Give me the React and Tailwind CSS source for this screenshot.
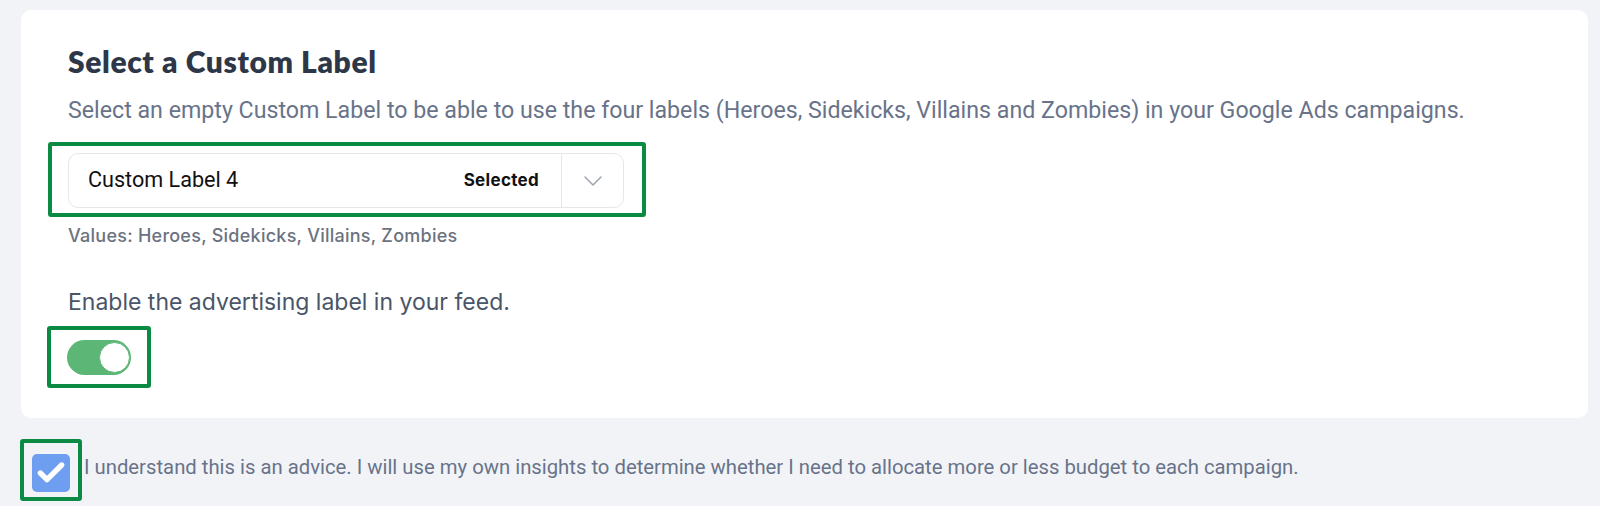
import React, { useState } from 'react';
import { ChevronDown, Check } from 'lucide-react';

const sans = { fontFamily: 'Roboto, "Liberation Sans", sans-serif' };

export default function App() {
  const [enabled, setEnabled] = useState(true);
  const [agreed, setAgreed] = useState(true);

  return (
    <div className="min-h-[506px] bg-[#f2f3f7] pl-[21px] pr-[12px] pt-[10px]" style={sans}>
      <div className="bg-white rounded-[10px] pl-[47px] pr-8 pt-[33px] pb-[30px]">
        <h2 className="text-[30px] leading-[36px] font-extrabold tracking-[0.6px] text-[#2d3748] font-['Lato',sans-serif]">
          Select a Custom Label
        </h2>
        <p className="mt-[16px] text-[23.2px] leading-[30px] text-[#68738a]">
          Select an empty Custom Label to be able to use the four labels (Heroes, Sidekicks, Villains and Zombies) in your Google Ads campaigns.
        </p>

        {/* select */}
        <div className="mt-[17px] -ml-[20px] w-[598px] border-4 border-[#0b8a43] rounded-[3px] pl-4 pr-[18px] pt-[7px] pb-[5px]">
          <div className="flex items-center h-[55px] border border-[#e5e7eb] rounded-[10px]">
            <span className="flex-1 pl-[19px] text-[21.6px] text-[#111]">Custom Label 4</span>
            <span className="pr-[22px] text-[17px] font-bold tracking-[0.3px] text-[#111] font-['Inter',sans-serif]">Selected</span>
            <div className="h-full w-[62px] border-l border-[#e5e7eb] flex items-center justify-center">
              <ChevronDown size={32} strokeWidth={1.1} className="text-[#9ca3af]" />
            </div>
          </div>
        </div>
        <p className="mt-[7px] text-[18px] leading-[24px] font-medium tracking-[0.25px] text-[#6b7280] font-['Inter',sans-serif]">
          Values: Heroes, Sidekicks, Villains, Zombies
        </p>

        <p className="mt-[39px] text-[23px] leading-[30px] text-[#4a5568] font-['Inter',sans-serif]">
          Enable the advertising label in your feed.
        </p>

        {/* toggle */}
        <div className="mt-[9px] -ml-[21px] w-[104px] border-4 border-[#0b8a43] rounded-[3px] pl-4 pt-[10px] pb-[9px]">
          <button
            onClick={() => setEnabled(!enabled)}
            className={`relative block w-[64px] h-[35px] rounded-full ${enabled ? 'bg-[#5cb776]' : 'bg-gray-300'}`}
          >
            <span
              className={`absolute top-[2px] h-[31px] w-[31px] rounded-full bg-white border-[1.5px] border-[#5cb776] ${enabled ? 'right-[1px]' : 'left-[1px]'}`}
            />
          </button>
        </div>
      </div>

      {/* confirmation */}
      <div className="mt-[21px] -ml-[1px] flex items-start">
        <div className="w-[62px] h-[62px] border-4 border-[#0b8a43] rounded-[3px] pl-[8px] pt-[11px]">
          <button
            onClick={() => setAgreed(!agreed)}
            className="w-[38px] h-[38px] rounded-[5px] bg-[#6d9ef0] flex items-center justify-center"
          >
            {agreed && <Check size={32} strokeWidth={4} className="text-white" />}
          </button>
        </div>
        <p className="ml-[2px] mt-[15px] text-[20.3px] leading-[26px] text-[#68738a]">
          I understand this is an advice. I will use my own insights to determine whether I need to allocate more or less budget to each campaign.
        </p>
      </div>
    </div>
  );
}
